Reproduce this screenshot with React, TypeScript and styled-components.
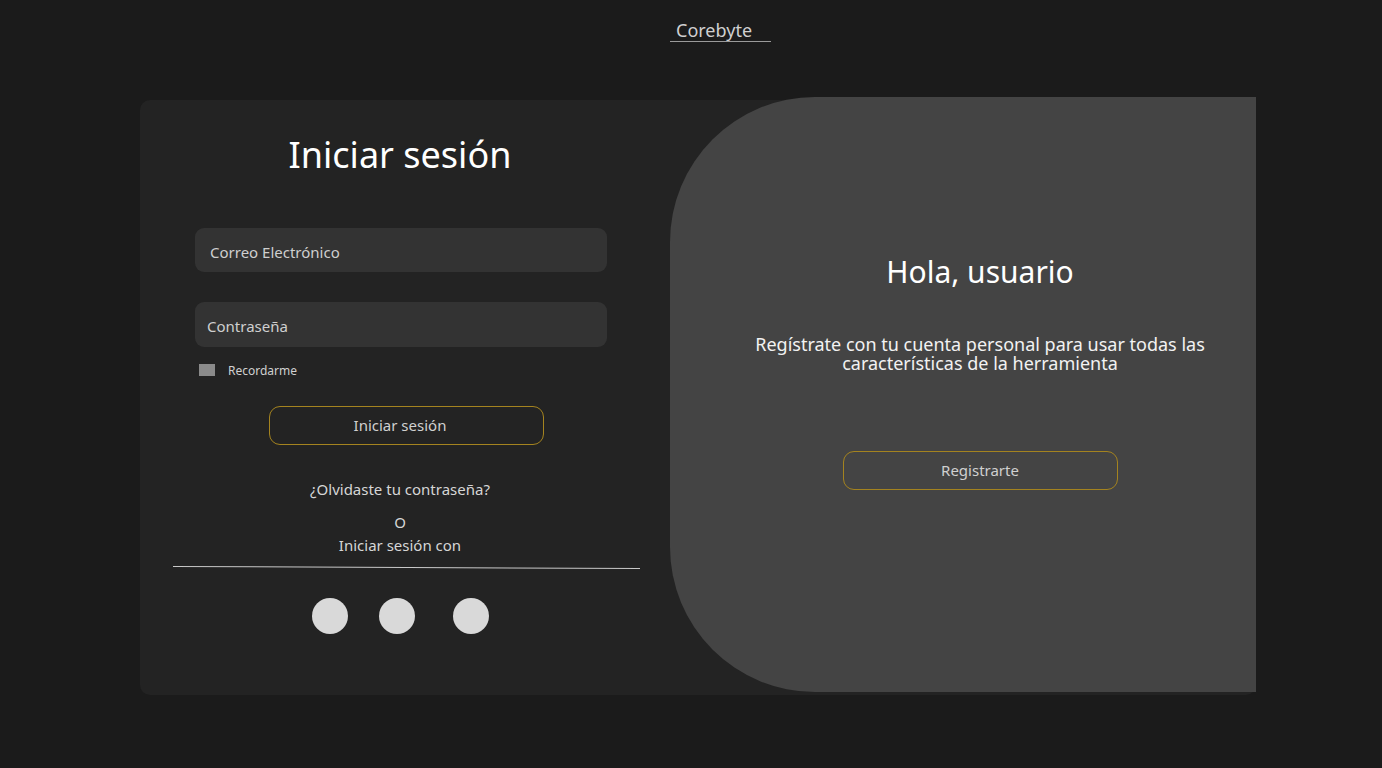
import React from "react";
import styled, { createGlobalStyle } from "styled-components";

const Global = createGlobalStyle`
  html, body { margin: 0; padding: 0; background: #1b1b1b; }
  body { font-family: "Noto Sans", "Open Sans", sans-serif; color: #fff; }
  * { box-sizing: border-box; }
`;

const Page = styled.div`
  min-height: 768px;
  display: flex;
  flex-direction: column;
  align-items: flex-start;
`;

const Brand = styled.div`
  margin: 20px 0 0 670px;
  width: 101px;
  padding-left: 6px;
  font-size: 18px;
  line-height: 21px;
  color: #d0d0d0;
  border-bottom: 1px solid #9a9a9a;
`;

const Card = styled.div`
  margin: 58px 0 0 140px;
  width: 1116px;
  height: 595px;
  background: #232323;
  border-radius: 10px;
  display: flex;
`;

const LeftCol = styled.div`
  flex: 1;
  display: flex;
  flex-direction: column;
  align-items: center;
  padding: 31px 10px 0 0;
`;

const Title = styled.h1`
  margin: 0;
  font-weight: 400;
  font-size: 36px;
  line-height: 48px;
  color: #fff;
`;

const Field = styled.input<{ $pad: number; $h: number; $mt: number }>`
  width: 412px;
  height: ${(p) => p.$h}px;
  margin-top: ${(p) => p.$mt}px;
  margin-left: 2px;
  border: none;
  outline: none;
  border-radius: 9px;
  background: #333333;
  padding: 3px 0 0 ${(p) => p.$pad}px;
  font-family: inherit;
  font-size: 15px;
  color: #d0d0d0;
  &::placeholder { color: #cfcfcf; }
`;

const RememberRow = styled.label`
  width: 412px;
  margin: 13px 0 0 2px;
  height: 20px;
  display: flex;
  align-items: center;
  gap: 13px;
  padding-left: 4px;
  font-size: 12px;
  color: #d0d0d0;
`;

const Box = styled.span`
  width: 16px;
  height: 12px;
  background: #8a8a8a;
  display: inline-block;
`;

const OutlineButton = styled.button<{ $ml?: number; $pr?: number; $mt: number }>`
  width: 275px;
  height: 39px;
  margin: ${(p) => p.$mt}px 0 0 ${(p) => p.$ml ?? 0}px;
  padding: 0 ${(p) => p.$pr ?? 0}px 2px 0;
  border: 1px solid #a4831f;
  border-radius: 11px;
  background: transparent;
  color: #d0d0d0;
  font-family: inherit;
  font-size: 15px;
  cursor: pointer;
`;

const TextLine = styled.div<{ $mt: number }>`
  margin-top: ${(p) => p.$mt}px;
  font-size: 15px;
  line-height: 20px;
  color: #d6d6d6;
`;

const Divider = styled.div`
  width: 467px;
  height: 1px;
  margin: 12px 0 0 12px;
  background: #c8c8c8;
  transform: rotate(0.25deg);
`;

const Socials = styled.div`
  margin-top: 30px;
  display: flex;
`;

const Dot = styled.span<{ $ml?: number }>`
  width: 36px;
  height: 36px;
  margin-left: ${(p) => p.$ml ?? 0}px;
  border-radius: 50%;
  background: #d9d9d9;
`;

const Panel = styled.div`
  width: 586px;
  height: 595px;
  margin-top: -3px;
  background: #444444;
  border-radius: 145px 0 0 145px;
  display: flex;
  flex-direction: column;
  align-items: center;
  padding: 155px 0 0 34px;
  text-align: center;
`;

const Hello = styled.h2`
  margin: 0;
  font-weight: 400;
  font-size: 30px;
  line-height: 40px;
  color: #fff;
`;

const Blurb = styled.p`
  margin: 43px 0 0;
  font-size: 18px;
  line-height: 19px;
  color: #f2f2f2;
`;

export default function App() {
  return (
    <>
      <Global />
      <Page>
        <Brand>Corebyte</Brand>
        <Card>
          <LeftCol>
            <Title>Iniciar sesión</Title>
            <Field $pad={15} $h={44} $mt={49} placeholder="Correo Electrónico" />
            <Field $pad={12} $h={45} $mt={30} placeholder="Contraseña" type="password" />
            <RememberRow>
              <Box />
              Recordarme
            </RememberRow>
            <OutlineButton $ml={12} $pr={12} $mt={26}>Iniciar sesión</OutlineButton>
            <TextLine $mt={34}>¿Olvidaste tu contraseña?</TextLine>
            <TextLine $mt={13}>O</TextLine>
            <TextLine $mt={3}>Iniciar sesión con</TextLine>
            <Divider />
            <Socials>
              <Dot />
              <Dot $ml={31} />
              <Dot $ml={38} />
            </Socials>
          </LeftCol>
          <Panel>
            <Hello>Hola, usuario</Hello>
            <Blurb>
              Regístrate con tu cuenta personal para usar todas las
              <br />
              características de la herramienta
            </Blurb>
            <OutlineButton $mt={78}>Registrarte</OutlineButton>
          </Panel>
        </Card>
      </Page>
    </>
  );
}
